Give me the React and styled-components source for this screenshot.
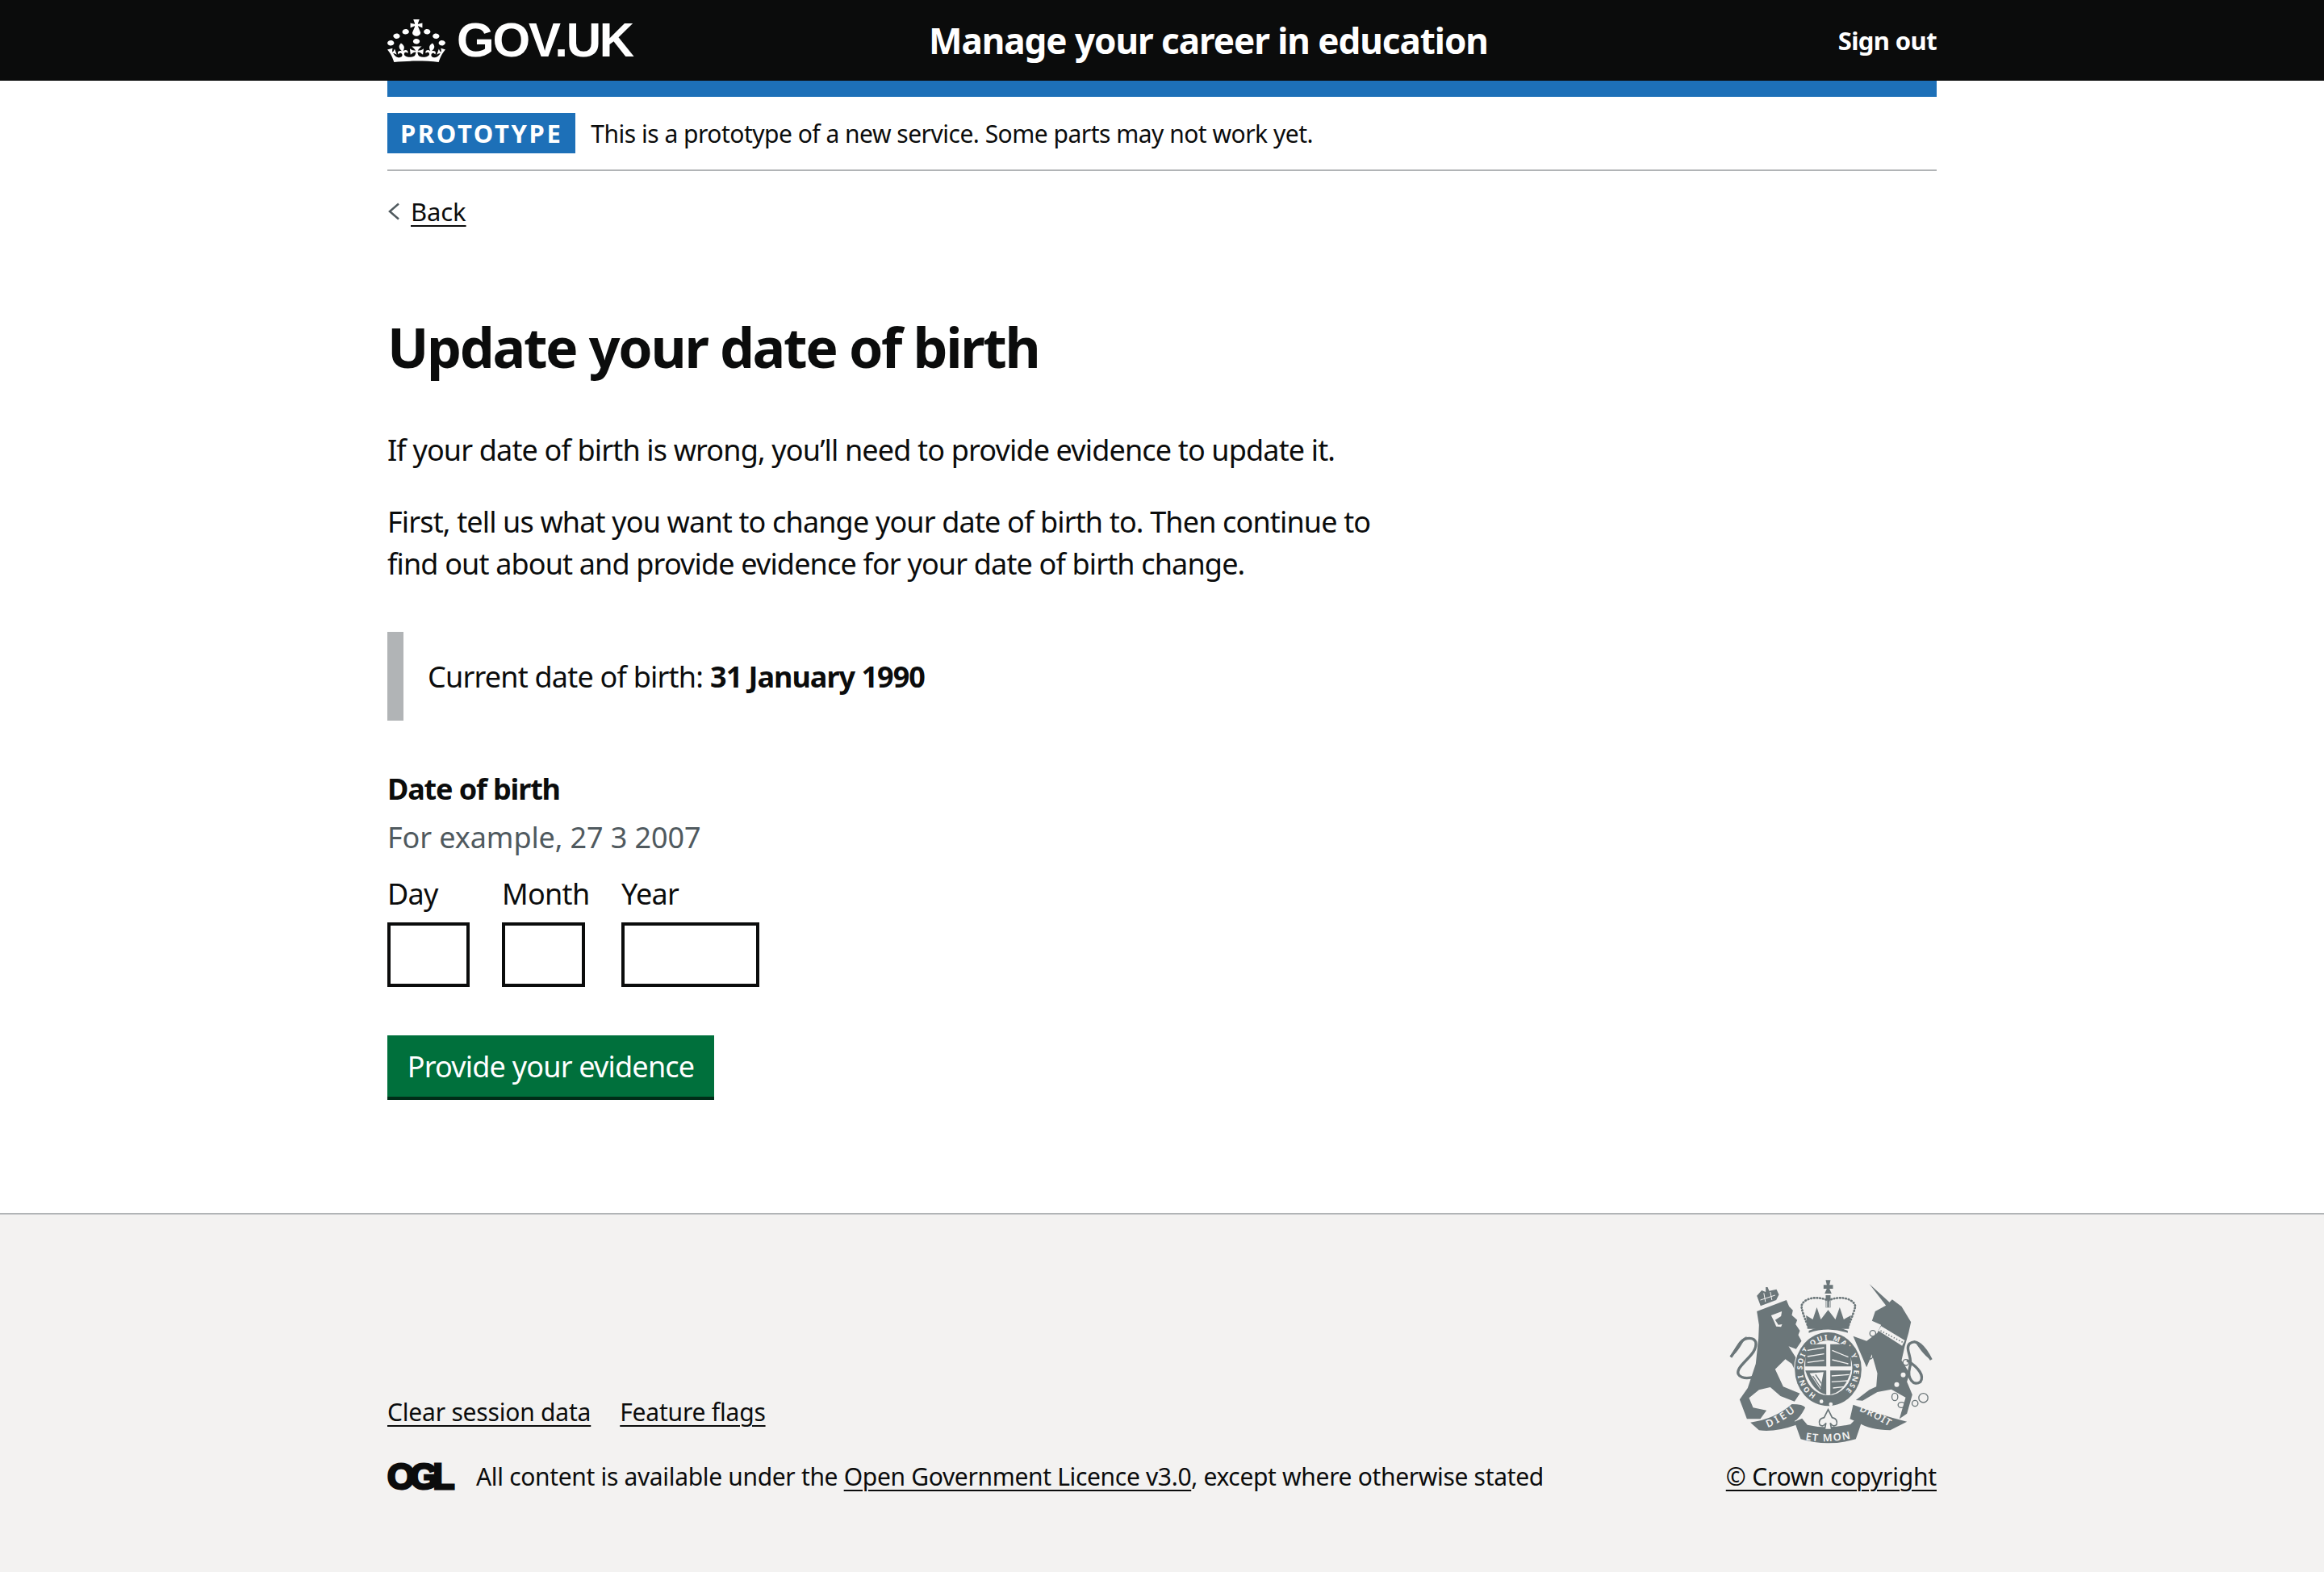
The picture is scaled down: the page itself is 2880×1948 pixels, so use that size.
import React from 'react';
import styled, { createGlobalStyle } from 'styled-components';

const Global = createGlobalStyle`
  html, body { margin: 0; padding: 0; background: #fff; }
  body { font-family: "Noto Sans", "Open Sans", Arial, sans-serif; color: #0b0c0c; }
  * { box-sizing: border-box; }
  a { color: inherit; }
`;

const Page = styled.div`display:flex;flex-direction:column;min-height:1948px;`;
const Container = styled.div`width:1920px;margin:0 auto;`;

const Header = styled.header`background:#0b0c0c;color:#fff;height:100px;`;
const HeaderRow = styled(Container)`display:flex;align-items:center;height:100%;`;
const Brand = styled.a`display:flex;align-items:center;width:671px;text-decoration:none;gap:14px;`;
const BrandText = styled.span`font:bold 60px/1 "Liberation Sans",Arial,sans-serif;letter-spacing:-2.2px;`;
const ServiceName = styled.a`font-size:44px;font-weight:700;text-decoration:none;letter-spacing:-1.05px;`;
const SignOut = styled.a`margin-left:auto;font-size:31px;font-weight:700;text-decoration:none;letter-spacing:-.6px;`;

const Phase = styled(Container)`border-top:20px solid #1d70b8;border-bottom:2px solid #b1b4b6;padding:20px 0;display:flex;align-items:center;gap:19px;height:112px;`;
const Tag = styled.strong`background:#1d70b8;color:#fff;font-size:31px;font-weight:700;letter-spacing:2.6px;line-height:50px;height:50px;padding:0 16px;`;
const PhaseText = styled.span`font-size:30px;letter-spacing:-.5px;`;

const Back = styled(Container)`display:flex;align-items:center;gap:13px;margin-top:32px;height:36px;font-size:31px;letter-spacing:-.1px;`;
const Chevron = styled.svg`width:16px;height:22px;display:block;`;
const Link = styled.a`text-decoration:underline;text-decoration-thickness:2px;text-underline-offset:5px;`;

const Main = styled(Container)`padding-top:110px;flex:1;`;
const Title = styled.h1`margin:0 0 62px;font-size:68px;line-height:80px;font-weight:700;letter-spacing:-2.3px;`;
const Body = styled.p`margin:0 0 37px;width:1260px;font-size:36px;line-height:52px;letter-spacing:-.85px;`;
const Inset = styled.div`display:flex;align-items:center;height:110px;border-left:20px solid #b1b4b6;padding-left:30px;margin:58px 0 60px;font-size:36px;letter-spacing:-.8px;`;
const Strong = styled.strong`font-weight:700;margin-left:9px;letter-spacing:-1px;`;
const Legend = styled.div`font-size:36px;font-weight:700;line-height:50px;letter-spacing:-1.15px;`;
const Hint = styled.div`font-size:36px;line-height:50px;color:#505a5f;margin-top:10px;letter-spacing:-.1px;`;
const DateRow = styled.div`display:flex;margin-top:20px;`;
const DateItem = styled.label`display:flex;flex-direction:column;gap:10px;width:${p=>p.$w}px;margin-right:${p=>p.$gap}px;font-size:36px;line-height:50px;letter-spacing:-.7px;white-space:nowrap;`;
const Box = styled.input`display:block;width:100%;height:80px;border:4px solid #0b0c0c;background:#fff;border-radius:0;padding:0;`;
const Button = styled.button`display:block;margin-top:60px;width:405px;height:76px;background:#00703c;border:0;border-radius:0;box-shadow:0 4px 0 #002d18;color:#fff;font:400 36px "Noto Sans",sans-serif;letter-spacing:-.8px;padding:0;`;

const Footer = styled.footer`background:#f3f2f1;border-top:2px solid #b1b4b6;height:445px;`;
const FooterRow = styled(Container)`display:flex;justify-content:space-between;padding-top:80px;`;
const FooterLeft = styled.div`display:flex;flex-direction:column;justify-content:flex-end;`;
const FooterLinks = styled.div`display:flex;gap:36px;font-size:30px;line-height:40px;letter-spacing:-.2px;`;
const Licence = styled.div`display:flex;align-items:center;gap:28px;margin-top:40px;font-size:30px;line-height:40px;letter-spacing:-.33px;`;
const Ogl = styled.span`font:900 44px/40px "Liberation Sans",Arial,sans-serif;letter-spacing:-6px;-webkit-text-stroke:3px #0b0c0c;width:82px;`;
const FooterRight = styled.div`display:flex;flex-direction:column;align-items:flex-end;`;
const ArmsSvg = styled.svg`width:252px;height:205px;margin-right:5px;display:block;`;
const Copy = styled.div`margin-top:20px;font-size:30px;line-height:40px;letter-spacing:-.2px;`;

const Crown = () => (
  <svg xmlns="http://www.w3.org/2000/svg" viewBox="0 0 32 30" width="72" height="53" fill="#fff" preserveAspectRatio="none">
    <path d="M22.6 10.4c-1 .4-2-.1-2.4-1-.4-.9.1-2 1-2.4.9-.4 2 .1 2.4 1s-.1 2-1 2.4m-5.9 6.7c-.9.4-2-.1-2.4-1-.4-.9.1-2 1-2.4.9-.4 2 .1 2.4 1s-.1 2-1 2.4m10.8-3.7c-1 .4-2-.1-2.4-1-.4-.9.1-2 1-2.4.9-.4 2 .1 2.4 1s0 2-1 2.4m3.3 4.8c-1 .4-2-.1-2.4-1-.4-.9.1-2 1-2.4.9-.4 2 .1 2.4 1s-.1 2-1 2.4M17 4.7l2.3 1.2V2.5l-2.3.7-.2-.2.9-3h-3.4l.9 3-.2.2c-.1.1-2.3-.7-2.3-.7v3.4L15 4.7c.1.1.1.2.2.2l-1.3 4c-.1.2-.1.4-.1.6 0 1.1.8 2 1.9 2.2h.7c1-.2 1.9-1.1 1.9-2.2 0-.2 0-.4-.1-.6l-1.3-4c-.1-.1 0-.2.1-.2m-7.6 5.7c.9.4 2-.1 2.4-1 .4-.9-.1-2-1-2.4-.9-.4-2 .1-2.4 1s0 2 1 2.4m-5 3c.9.4 2-.1 2.4-1 .4-.9-.1-2-1-2.4-.9-.4-2 .1-2.4 1s.1 2 1 2.4m-3.2 4.8c.9.4 2-.1 2.4-1 .4-.9-.1-2-1-2.4-.9-.4-2 .1-2.4 1s0 2 1 2.4m14.8 11c4.4 0 8.6.3 12.3.8 1.1-4.5 2.4-7 3.7-8.8l-2.5-.9c.2 1.3.3 1.9 0 2.7-.4-.4-.8-1.1-1.1-2.3l-1.2 4c.7-.5 1.3-.8 2-.9-1.1 2.5-2.6 3.1-3.5 3-1.1-.2-1.7-1.2-1.5-2.1.3-1.2 1.5-1.5 2.1-.1 1.1-2.3-.8-3-2-2.3 1.9-1.9 2.1-3.5.6-5.6-2.1 1.6-2.1 3.2-1.2 5.5-1.2-1.4-3.2-.6-2.5 1.6.9-1.4 2.1-.5 1.9.8-.2 1.1-1.7 2.1-3.5 1.9-2.7-.2-2.9-2.1-2.9-3.6.7-.1 1.9.5 2.9 1.9l.4-4.3c-1.1 1.1-2.1 1.4-3.2 1.4.4-1.2 2.1-3 2.1-3h-5.4s1.7 1.9 2.1 3c-1.1 0-2.1-.2-3.2-1.4l.4 4.3c1-1.4 2.2-2 2.9-1.9-.1 1.5-.2 3.4-2.9 3.6-1.9.2-3.4-.8-3.5-1.9-.2-1.3 1-2.2 1.9-.8.7-2.3-1.2-3-2.5-1.6.9-2.2.9-3.9-1.2-5.5-1.5 2-1.3 3.7.6 5.6-1.2-.7-3.1 0-2 2.3.6-1.4 1.8-1.1 2.1.1.2.9-.3 1.9-1.5 2.1-.9.2-2.4-.5-3.5-3 .6 0 1.2.3 2 .9l-1.2-4c-.3 1.1-.7 1.9-1.1 2.3-.3-.8-.2-1.4 0-2.7l-2.9.9C1.3 23 2.6 25.5 3.7 30c3.7-.5 7.9-.8 12.3-.8" />
  </svg>
);

const G = '#6b7679';
const BG = '#f3f2f1';

const Arms = () => (
  <ArmsSvg viewBox="130 70 755 615" xmlns="http://www.w3.org/2000/svg">
    <defs>
      <path id="garter" d="M452 500 A96 108 0 1 1 542 500" />
      <path id="ribL" d="M272 622 Q320 605 372 565" />
      <path id="ribC" d="M412 668 Q495 682 582 662" />
      <path id="ribR" d="M612 560 Q670 585 730 622" />
    </defs>
    {/* lion tail */}
    <path d="M225 432 C190 445 150 435 165 405 C180 375 235 345 228 305 C222 285 190 285 172 305 C160 320 150 340 135 360" fill="none" stroke={G} strokeWidth="10" />
    <path d="M135 360 C150 330 165 295 195 282 C175 310 165 340 135 360Z" fill={G} />
    {/* lion body */}
    <path d="M232 190 L342 148 L352 172 L366 186 L362 204 L382 222 L376 238 L392 262 L386 278 L398 300 L378 330 L350 320 L398 395 L405 420 L385 432 L362 385 L338 368 L300 405 L330 470 L392 495 L372 525 L320 505 L282 472 L240 482 L203 512 L218 548 L268 558 L245 590 L195 590 L168 518 L198 475 L228 385 L238 290 L240 240Z" fill={G} />
    <path d="M285 205 L325 190 L322 208 L300 222 L312 240 L326 238 L322 248 L304 246 L295 225Z" fill={BG} />
    {/* lion crown */}
    <path d="M246 170 L232 132 L250 112 L265 118 L265 100 L272 100 L278 114 L305 108 L314 128 L304 148Z" fill={G} />
    <path d="M245 148 L300 130 M258 122 L264 155 M282 118 L288 148" stroke={BG} strokeWidth="3" fill="none" />
    {/* royal crown */}
    <path d="M480 92 L492 92 L488 74 L506 74 L502 92 L515 92 L515 106 L502 106 L510 124 L484 124 L492 106 L480 106Z" fill={G} />
    <path d="M488 130 L506 130 L506 176 L488 176Z" fill={G} />
    <path d="M492 148 L492 176 M502 148 L502 176" stroke={BG} strokeWidth="3" />
    <path d="M420 240 C408 210 400 190 398 172 C400 145 450 128 497 150 C545 128 595 145 598 172 C594 190 586 210 574 240Z" fill="none" stroke={G} strokeWidth="8" strokeDasharray="2 9" strokeLinecap="round" />
    <path d="M415 205 L440 220 L455 175 L470 220 L497 185 L524 220 L540 175 L555 220 L582 205 L574 255 L420 255Z" fill={G} />
    <path d="M425 262 Q497 230 570 262 L570 270 Q497 245 425 270Z" fill={G} />
    {/* unicorn tail */}
    <path d="M790 372 C835 400 855 430 840 452 C815 470 790 440 800 400 C815 365 780 330 800 310 C825 290 855 320 880 370" fill="none" stroke={G} strokeWidth="10" />
    <path d="M880 372 C865 340 840 305 815 298 C835 325 850 350 880 372Z" fill={G} />
    {/* unicorn body */}
    <path d="M650 88 L725 156 L735 146 L770 172 L805 230 L796 270 L782 320 L770 372 L800 420 L790 452 L810 500 L790 570 L762 590 L785 510 L732 480 L680 490 L625 522 L600 520 L650 482 L676 470 L680 420 L660 350 L640 398 L590 282 L640 300 L680 270 L694 240 L660 225 L672 190 L712 168Z" fill={G} />
    <path d="M684 262 L694 245 L782 298 L772 318Z" fill={BG} />
    <path d="M692 262 L776 306" stroke={G} strokeWidth="5" strokeDasharray="4 7" />
    <g fill="none" stroke={G} strokeWidth="4">
      <circle cx="663" cy="272" r="11" /><circle cx="652" cy="356" r="11" /><circle cx="786" cy="380" r="11" />
      <ellipse cx="745" cy="508" rx="11" ry="14" /><ellipse cx="770" cy="538" rx="13" ry="10" /><circle cx="820" cy="532" r="11" /><circle cx="851" cy="512" r="17" />
    </g>
    <circle cx="776" cy="426" r="9" fill={BG} /><circle cx="752" cy="462" r="9" fill={BG} />
    {/* garter */}
    <ellipse cx="497" cy="405" rx="127" ry="140" fill={BG} />
    <ellipse cx="497" cy="405" rx="124" ry="137" fill={G} />
    <ellipse cx="497" cy="400" rx="90" ry="102" fill={BG} />
    <text fontFamily="Noto Sans, sans-serif" fontWeight="700" fontSize="27" fill={BG}><textPath href="#garter" textLength="520" lengthAdjust="spacing">HONI SOIT QUI MAL Y PENSE</textPath></text>
    <path d="M420 312 H490 V395 H412 Q412 340 420 312Z" fill={G} />
    <path d="M505 312 H575 Q582 340 582 395 H505Z" fill={G} />
    <path d="M412 410 H490 V500 Q440 490 412 410Z" fill={G} />
    <path d="M505 410 H582 Q560 490 505 500Z" fill={G} />
    <path d="M420 335 L482 325 M420 358 L482 348 M420 380 L482 372 M512 335 L572 360 M512 370 L572 385 M510 430 L575 425 M510 452 L570 448 M515 475 L558 470" stroke={BG} strokeWidth="4" fill="none" />
    <path d="M428 420 L480 416 L468 480Z" fill={BG} />
    <path d="M440 430 L470 475 M450 425 L472 458" stroke={G} strokeWidth="4" />
    <circle cx="472" cy="525" r="7" fill={BG} /><circle cx="507" cy="535" r="7" fill={BG} />
    {/* ribbons */}
    <path d="M208 603 Q300 590 362 535 Q405 535 412 548 Q390 590 372 598 L378 612 Q300 640 240 632Z" fill={G} />
    <path d="M372 600 L400 588 L420 612 Q495 630 580 610 L600 590 L622 600 L600 665 Q495 695 395 665Z" fill={G} />
    <path d="M578 590 L590 537 Q690 575 790 600 L728 632 Q650 630 612 605Z" fill={G} />
    <g fontFamily="Noto Sans, sans-serif" fontWeight="600" fill={BG}>
      <text fontSize="38"><textPath href="#ribL" textLength="120">DIEU</textPath></text>
      <text fontSize="38"><textPath href="#ribC" textLength="170">ET MON</textPath></text>
      <text fontSize="36"><textPath href="#ribR" textLength="125">DROIT</textPath></text>
    </g>
    {/* fleur */}
    <path d="M497 555 L512 585 Q535 590 528 612 Q515 622 505 605 L510 630 L484 630 L489 605 Q478 622 466 612 Q458 590 482 585Z" fill={BG} stroke={G} strokeWidth="5" />
  </ArmsSvg>
);

export default function App() {
  return (
    <Page>
      <Global />
      <Header>
        <HeaderRow>
          <Brand href="#"><Crown /><BrandText>GOV.UK</BrandText></Brand>
          <ServiceName href="#">Manage your career in education</ServiceName>
          <SignOut href="#">Sign out</SignOut>
        </HeaderRow>
      </Header>
      <Phase>
        <Tag>PROTOTYPE</Tag>
        <PhaseText>This is a prototype of a new service. Some parts may not work yet.</PhaseText>
      </Phase>
      <Back>
        <Chevron viewBox="0 0 16 22" fill="none" stroke="#505a5f" strokeWidth="2.5"><path d="M14 1.5 L3 11 L14 20.5" /></Chevron>
        <Link href="#">Back</Link>
      </Back>
      <Main>
        <Title>Update your date of birth</Title>
        <Body>If your date of birth is wrong, you’ll need to provide evidence to update it.</Body>
        <Body>First, tell us what you want to change your date of birth to. Then continue to find out about and provide evidence for your date of birth change.</Body>
        <Inset>Current date of birth:<Strong>31 January 1990</Strong></Inset>
        <Legend>Date of birth</Legend>
        <Hint>For example, 27 3 2007</Hint>
        <DateRow>
          <DateItem $w={102} $gap={40}>Day<Box /></DateItem>
          <DateItem $w={103} $gap={45}>Month<Box /></DateItem>
          <DateItem $w={171} $gap={0}>Year<Box /></DateItem>
        </DateRow>
        <Button>Provide your evidence</Button>
      </Main>
      <Footer>
        <FooterRow>
          <FooterLeft>
            <FooterLinks><Link href="#">Clear session data</Link><Link href="#">Feature flags</Link></FooterLinks>
            <Licence><Ogl>OGL</Ogl><span>All content is available under the <Link href="#">Open Government Licence v3.0</Link>, except where otherwise stated</span></Licence>
          </FooterLeft>
          <FooterRight>
            <Arms />
            <Copy><Link href="#">© Crown copyright</Link></Copy>
          </FooterRight>
        </FooterRow>
      </Footer>
    </Page>
  );
}
